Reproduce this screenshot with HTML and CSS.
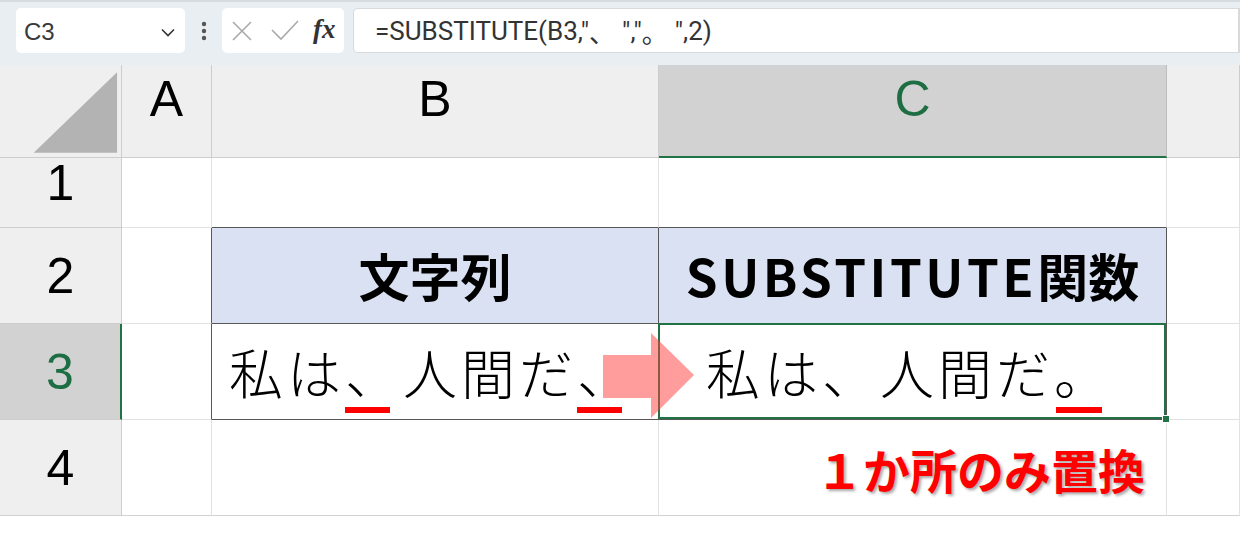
FILE: index.html
```html
<!DOCTYPE html>
<html lang="ja">
<head>
    <meta charset="UTF-8">
    <meta name="viewport" content="width=device-width, initial-scale=1.0">
    <title>SUBSTITUTE</title>
    <link rel="stylesheet" href="styles.css">
</head>
<body>
    <div class="toolbar">
        <div class="namebox">
            <span>C3</span>
            <svg width="14" height="9" viewBox="0 0 14 9"><path d="M1 1.5 L7 7.5 L13 1.5" fill="none" stroke="#333" stroke-width="1.6"/></svg>
        </div>
        <div class="dots">
            <svg width="6" height="20" viewBox="0 0 6 20"><circle cx="3" cy="3" r="2.2" fill="#555"/><circle cx="3" cy="10" r="2.2" fill="#555"/><circle cx="3" cy="17" r="2.2" fill="#555"/></svg>
        </div>
        <div class="fxbox">
            <svg class="icon-x" width="20" height="20" viewBox="0 0 20 20"><path d="M1 1 L19 19 M19 1 L1 19" stroke="#a9a9a9" stroke-width="1.6" fill="none"/></svg>
            <svg class="icon-ok" width="28" height="21" viewBox="0 0 28 21"><path d="M1 10 L10 19 L27 1" stroke="#a9a9a9" stroke-width="1.6" fill="none"/></svg>
            <span class="fx">fx</span>
        </div>
        <div class="formula">=SUBSTITUTE(B3,"<span class="jp">、</span>","<span class="jp">。</span>",2)</div>
    </div>

    <div class="sheet">
        <!-- column headers -->
        <div class="cell hd corner">
            <svg width="122" height="93" viewBox="0 0 122 93"><polygon points="34,88 118,88 118,7" fill="#b3b3b3"/></svg>
        </div>
        <div class="cell hd col">A</div>
        <div class="cell hd col">B</div>
        <div class="cell hd col sel-col">C</div>
        <div class="cell hd col"></div>

        <!-- row 1 -->
        <div class="cell hd row first">1</div>
        <div class="cell"></div>
        <div class="cell b-b"></div>
        <div class="cell b-b"></div>
        <div class="cell"></div>

        <!-- row 2 -->
        <div class="cell hd row">2</div>
        <div class="cell b-r"></div>
        <div class="cell th b-r b-b">文字列</div>
        <div class="cell th b-r b-b"><span class="lat">SUBSTITUTE</span>関数</div>
        <div class="cell"></div>

        <!-- row 3 -->
        <div class="cell hd row sel-row">3</div>
        <div class="cell b-r"></div>
        <div class="cell val b-r b-b">
            私は<span class="mark">、</span>人間だ<span class="mark">、</span>
            <svg class="arrow" width="91" height="85" viewBox="0 0 91 85"><polygon points="0,22 48,22 48,0 91,42 48,85 48,65 0,65" fill="#ff3b3b" fill-opacity="0.5"/></svg>
        </div>
        <div class="cell val c3 b-r b-b">私は、人間だ<span class="mark">。</span></div>
        <div class="cell"></div>

        <!-- row 4 -->
        <div class="cell hd row last">4</div>
        <div class="cell last"></div>
        <div class="cell last"></div>
        <div class="cell last note">１か所のみ置換</div>
        <div class="cell last"></div>
    </div>
</body>
</html>
```

FILE: styles.css
```css
body {
    margin: 0;
    width: 1240px;
    height: 533px;
    overflow: hidden;
    background-color: #fff;
    font-family: "Liberation Sans", "Noto Sans CJK JP", sans-serif;
    color: #000;
}
.toolbar {
    height: 65px;
    box-sizing: border-box;
    background-color: #e8eef2;
    border-top: 2px solid #d8dcdf;
    padding: 6px 0 0 16px;
    display: flex;
    align-items: flex-start;
}
.namebox {
    width: 169px;
    height: 45px;
    box-sizing: border-box;
    background-color: #fff;
    border-radius: 5px;
    display: flex;
    align-items: center;
    justify-content: space-between;
    padding: 3px 10px 0 8px;
    font-size: 24px;
    color: #3a3a3a;
}
.dots {
    width: 37px;
    height: 45px;
    display: flex;
    align-items: center;
    justify-content: center;
}
.fxbox {
    width: 122px;
    height: 45px;
    box-sizing: border-box;
    background-color: #fff;
    border-radius: 5px;
    display: flex;
    align-items: center;
    padding-left: 10px;
}
.icon-x {
    margin-right: 19px;
}
.icon-ok {
    margin-right: 14px;
}
.fx {
    font-family: "Liberation Serif", serif;
    font-style: italic;
    font-weight: bold;
    font-size: 27px;
    color: #333;
    padding-bottom: 3px;
}
.formula {
    flex: 1;
    height: 45px;
    margin-left: 9px;
    box-sizing: border-box;
    background-color: #fff;
    border: 1px solid #d6dadd;
    border-right-width: 2px;
    border-radius: 5px 0 0 5px;
    padding: 1px 0 0 21px;
    display: flex;
    align-items: center;
    font-family: Roboto, "Noto Sans CJK JP", sans-serif;
    font-size: 26px;
    color: #333;
    white-space: pre;
}
.formula .jp {
    padding-right: 7px;
}

.sheet {
    display: grid;
    grid-template-columns: 122px 90px 447px 508px 73px;
    grid-template-rows: 93px 70px 96px 96px 96px;
}
.cell {
    box-sizing: border-box;
    border-right: 1px solid #e2e2e2;
    border-bottom: 1px solid #e2e2e2;
    display: flex;
    align-items: center;
    position: relative;
}
.hd {
    background-color: #efefef;
    border-color: #cdcdcd;
    justify-content: center;
    font-size: 50px;
    line-height: 1;
}
.corner {
    align-items: stretch;
}
.col {
    align-items: flex-start;
    padding-top: 9px;
}
.row.first {
    align-items: flex-start;
    padding-top: 0;
}
.sel-col {
    background-color: #d2d2d2;
    border-right-color: #bdbdbd;
    border-bottom: 2px solid #217346;
    color: #1e6e44;
}
.sel-row {
    background-color: #d2d2d2;
    border-right: 2px solid #217346;
    color: #1e6e44;
}
.b-r {
    border-right-color: #575757;
}
.b-b {
    border-bottom-color: #575757;
}
.last {
    border-bottom-color: #d2d2d2;
}

.th {
    background-color: #d9e1f2;
    justify-content: center;
    font-family: "Noto Sans CJK JP", sans-serif;
    font-weight: 700;
    font-size: 51px;
    line-height: 1;
}
.th .lat {
    letter-spacing: 3.5px;
}
.val {
    font-family: "Noto Sans CJK JP", sans-serif;
    font-weight: 300;
    font-size: 54px;
    line-height: 54px;
    letter-spacing: 4px;
    padding-left: 17px;
    white-space: nowrap;
}
.val.c3 {
    padding-left: 47px;
}
.c3::before {
    content: "";
    position: absolute;
    top: -1px;
    left: -1px;
    right: 0;
    bottom: 0;
    border: 2px solid #217346;
}
.c3::after {
    content: "";
    position: absolute;
    right: -4px;
    bottom: -4px;
    width: 6px;
    height: 6px;
    background-color: #217346;
    border: 1px solid #fff;
    z-index: 2;
}
.mark {
    display: inline-block;
    position: relative;
}
.mark::after {
    content: "";
    position: absolute;
    left: 0;
    top: 62px;
    width: 45px;
    height: 6px;
    background-color: #ff0000;
}
.c3 .mark::after {
    left: 2px;
    width: 46px;
}
.arrow {
    position: absolute;
    left: 391px;
    top: 9px;
    z-index: 3;
}
.note {
    justify-content: flex-end;
    padding: 2px 21px 0 0;
    font-family: "Noto Sans CJK JP", sans-serif;
    font-weight: 700;
    font-size: 47px;
    color: #ff0000;
    text-shadow: 2px 2px 3px rgba(0, 0, 0, 0.35);
    white-space: nowrap;
}
```
